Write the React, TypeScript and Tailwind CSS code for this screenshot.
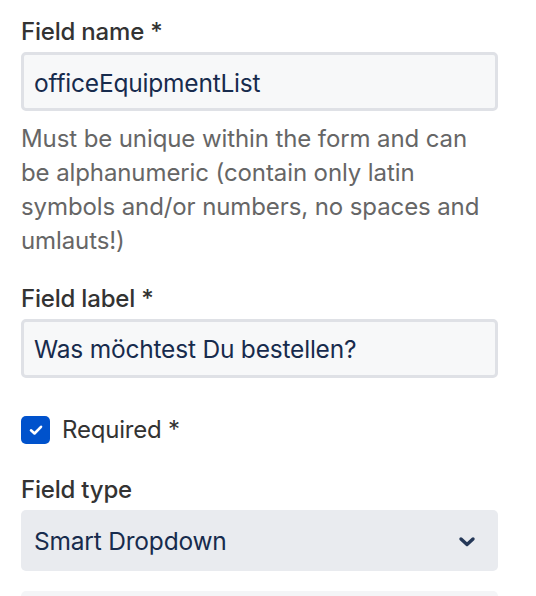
import React from "react";

export default function App() {
  const font = { fontFamily: "Inter, 'Noto Sans', sans-serif" };
  return (
    <div className="w-[536px] h-[596px] bg-white overflow-hidden" style={font}>
      <div className="pl-[21px] w-[498px] pt-[16px] flex flex-col">
        <label className="text-[24px] leading-[32px] font-medium text-[#333333] tracking-[-0.2px]">Field name *</label>
        <div className="mt-[4px] h-[59px] border-[3px] border-[#dfe1e6] rounded-[5px] bg-[#f7f8f9] flex items-center pl-[10px] pt-[3px] text-[24.5px] text-[#172b4d] tracking-[-0.2px]">
          officeEquipmentList
        </div>
        <p className="mt-[11px] text-[24px] leading-[34px] text-[#666666] pr-[10px] tracking-[-0.1px]">
          Must be unique within the form and can be alphanumeric (contain only latin symbols and/or numbers, no spaces and umlauts!)
        </p>
        <label className="mt-[25px] text-[24px] leading-[32px] font-medium text-[#333333] tracking-[-0.2px]">Field label *</label>
        <div className="mt-[4px] h-[59px] border-[3px] border-[#dfe1e6] rounded-[5px] bg-[#f7f8f9] flex items-center pl-[10px] pt-[2px] text-[24.5px] text-[#172b4d] tracking-[-0.2px]">
          Was möchtest Du bestellen?
        </div>
        <div className="mt-[36px] flex items-center gap-[12px]">
          <div className="w-[29px] h-[28px] rounded-[5px] bg-[#0052cc] flex items-center justify-center">
            <svg width="18" height="18" viewBox="0 0 18 18" fill="none">
              <path d="M4 9.3 L7.5 12.5 L14 5.8" stroke="white" strokeWidth="2.6" strokeLinecap="round" strokeLinejoin="round" />
            </svg>
          </div>
          <span className="text-[24px] leading-[32px] text-[#333333] tracking-[-0.2px]">Required *</span>
        </div>
        <label className="mt-[28px] text-[24px] leading-[32px] font-medium text-[#333333] tracking-[-0.2px]">Field type</label>
        <div className="mt-[4px] h-[61px] rounded-[5px] bg-[#e9ebef] flex items-center justify-between pl-[13px] pr-[22px] pt-[2px] text-[24.5px] text-[#172b4d] tracking-[-0.2px]">
          <span>Smart Dropdown</span>
          <svg width="18" height="12" viewBox="0 0 18 12" fill="none">
            <path d="M3 3 L9 8.5 L15 3" stroke="#253858" strokeWidth="3.4" strokeLinecap="round" strokeLinejoin="round" />
          </svg>
        </div>
        <div className="mt-[20px] h-[40px] rounded-t-[5px] bg-[#f4f5f7]" />
      </div>
    </div>
  );
}
